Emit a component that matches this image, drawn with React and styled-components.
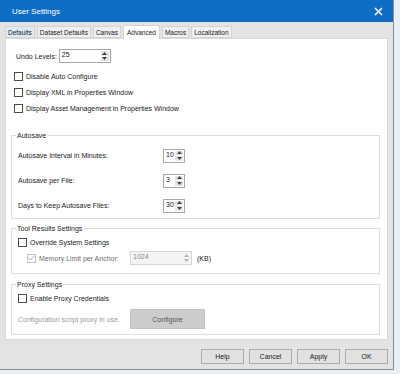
import React from 'react'
import styled, { createGlobalStyle } from 'styled-components'

const GlobalStyle = createGlobalStyle`
  html, body {
    margin: 0;
    padding: 0;
    background: #e9eef8;
  }
  body {
    font-family: "Liberation Sans", Arial, sans-serif;
    font-size: 7px;
    color: #1a1a1a;
  }
  * {
    box-sizing: border-box;
  }
`

const Window = styled.div`
  width: 394px;
  height: 370px;
  border-right: 1px solid #8f8f8f;
  border-bottom: 1px solid #8f8f8f;
  background: #e3e3e3;
  display: flex;
  flex-direction: column;
`

const TitleBar = styled.div`
  height: 22px;
  flex-shrink: 0;
  background: #0e6ec6;
  color: #fff;
  display: flex;
  align-items: center;
  justify-content: space-between;
  padding: 0 10px 0 12px;
  font-size: 8px;
`

const TabStrip = styled.div`
  display: flex;
  align-items: flex-end;
  height: 16px;
  flex-shrink: 0;
  padding: 0 0 0 5px;
  gap: 2px;
  font-size: 6.5px;
`

const Tab = styled.div`
  height: ${p => (p.$active ? '14px' : '12px')};
  padding: 0 ${p => (p.$active ? '3px' : '2px')};
  display: flex;
  align-items: center;
  background: ${p => (p.$active ? '#fff' : p.$hover ? '#dde9f5' : '#efefef')};
  border: 1px solid #d4d4d4;
  border-bottom: ${p => (p.$active ? 'none' : '1px solid #d4d4d4')};
  margin-bottom: ${p => (p.$active ? '-1px' : '0')};
  position: relative;
  z-index: ${p => (p.$active ? 1 : 0)};
`

const Panel = styled.div`
  margin: 0 5px 0 5px;
  height: 302px;
  flex-shrink: 0;
  background: #fff;
  border: 1px solid #d9d9d9;
  padding: 10px 0 0 5px;
  display: flex;
  flex-direction: column;
`

const UndoRow = styled.div`
  display: flex;
  align-items: center;
  gap: 2px;
  padding-left: 5px;
  margin-bottom: 5px;
`

const CheckRow = styled.label`
  display: flex;
  align-items: center;
  gap: 2px;
  height: 16px;
  flex-shrink: 0;
  margin-top: ${p => p.$mt || 0}px;
  padding-left: ${p => p.$indent ?? 3}px;
  color: ${p => (p.$dim ? '#6d6d6d' : '#1a1a1a')};
`

const Box = styled.span`
  width: 9px;
  height: 9px;
  border: 1px solid ${p => (p.$disabled ? '#c4c4c4' : '#4a4a4a')};
  background: #fff;
  display: inline-flex;
  align-items: center;
  justify-content: center;
  margin-right: 1px;
`

const Group = styled.fieldset`
  margin: ${p => p.$mt}px 7px 0 0;
  border: 1px solid #dedede;
  padding: 0 0 0 6px;
  min-width: 0;
  height: ${p => p.$h}px;
  flex-shrink: 0;
  display: flex;
  flex-direction: column;
`

const Legend = styled.legend`
  padding: 0 1px;
  margin-left: -2px;
  font-size: 7px;
  line-height: 9px;
`

const FieldRow = styled.div`
  display: flex;
  align-items: center;
  height: 25px;
  flex-shrink: 0;
  &:first-of-type {
    margin-top: 3px;
  }
`

const FieldLabel = styled.span`
  width: ${p => p.$w || 145}px;
`

const Spin = styled.div`
  width: ${p => p.$w}px;
  height: 14px;
  border: 1px solid ${p => (p.$disabled ? '#d6d6d6' : '#a8a8a8')};
  background: ${p => (p.$disabled ? '#f4f4f4' : '#fff')};
  display: flex;
  color: ${p => (p.$disabled ? '#8a8a8a' : '#1a1a1a')};
`

const SpinValue = styled.span`
  flex: 1;
  padding: 1px 0 0 2px;
`

const SpinButtons = styled.div`
  width: 8px;
  display: flex;
  flex-direction: column;
  margin: 1px 1px 1px 0;
  gap: 1px;
`

const SpinBtn = styled.div`
  flex: 1;
  background: ${p => (p.$disabled ? '#f4f4f4' : '#e6e6e6')};
  display: flex;
  align-items: center;
  justify-content: center;
`

const Unit = styled.span`
  color: #1a1a1a;
  margin-left: 3px;
`

const ProxyLine = styled.div`
  display: flex;
  align-items: center;
  margin-top: 3px;
  color: #9a9a9a;
`

const ProxyNote = styled.span`
  width: 112px;
`

const GrayButton = styled.div`
  width: 75px;
  height: 20px;
  background: #cccccc;
  border: 1px solid #c4c4c4;
  color: #555;
  display: flex;
  align-items: center;
  justify-content: center;
`

const Footer = styled.div`
  flex: 1;
  display: flex;
  justify-content: flex-end;
  align-items: flex-start;
  padding: 9px 5px 0 0;
  gap: 5px;
`

const Button = styled.div`
  width: 43px;
  height: 15px;
  background: #e1e1e1;
  border: 1px solid #adadad;
  display: flex;
  align-items: center;
  justify-content: center;
  color: #1a1a1a;
`

function Arrow({ up, disabled }) {
  return (
    <svg width="5" height="3" viewBox="0 0 5 3">
      <path d={up ? 'M0 3 L2.5 0 L5 3 Z' : 'M0 0 L2.5 3 L5 0 Z'} fill={disabled ? '#b5b5b5' : '#404040'} />
    </svg>
  )
}

function Spinner({ value, width, disabled }) {
  return (
    <Spin $w={width} $disabled={disabled}>
      <SpinValue>{value}</SpinValue>
      <SpinButtons>
        <SpinBtn $disabled={disabled}><Arrow up disabled={disabled} /></SpinBtn>
        <SpinBtn $disabled={disabled}><Arrow disabled={disabled} /></SpinBtn>
      </SpinButtons>
    </Spin>
  )
}

function Tick() {
  return (
    <svg width="7" height="6" viewBox="0 0 7 6">
      <path d="M0.5 3 L2.7 5 L6.5 0.8" stroke="#a8a8a8" strokeWidth="1" fill="none" />
    </svg>
  )
}

function Check({ children, indent, mt }) {
  return (
    <CheckRow $indent={indent} $mt={mt}>
      <Box />
      {children}
    </CheckRow>
  )
}

const tabs = ['Defaults', 'Dataset Defaults', 'Canvas', 'Advanced', 'Macros', 'Localization']

export default function App() {
  return (
    <>
      <GlobalStyle />
      <Window>
        <TitleBar>
          <span>User Settings</span>
          <svg width="9" height="9" viewBox="0 0 9 9">
            <path d="M1 1 L8 8 M8 1 L1 8" stroke="#fff" strokeWidth="1.6" />
          </svg>
        </TitleBar>
        <TabStrip>
          {tabs.map(t => (
            <Tab key={t} $active={t === 'Advanced'} $hover={t === 'Defaults'}>{t}</Tab>
          ))}
        </TabStrip>
        <Panel>
          <UndoRow>
            <span>Undo Levels:</span>
            <Spinner value="25" width={52} />
          </UndoRow>
          <Check>Disable Auto Configure</Check>
          <Check>Display XML in Properties Window</Check>
          <Check>Display Asset Management in Properties Window</Check>

          <Group $h={88} $mt={15}>
            <Legend>Autosave</Legend>
            <FieldRow>
              <FieldLabel>Autosave Interval in Minutes:</FieldLabel>
              <Spinner value="10" width={22} />
            </FieldRow>
            <FieldRow>
              <FieldLabel>Autosave per File:</FieldLabel>
              <Spinner value="3" width={22} />
            </FieldRow>
            <FieldRow>
              <FieldLabel>Days to Keep Autosave Files:</FieldLabel>
              <Spinner value="30" width={22} />
            </FieldRow>
          </Group>

          <Group $h={50} $mt={5}>
            <Legend>Tool Results Settings</Legend>
            <Check indent={0} mt={1}>Override System Settings</Check>
            <CheckRow $indent={9} $dim>
              <Box $disabled><Tick /></Box>
              <FieldLabel $w={89}>Memory Limit per Anchor:</FieldLabel>
              <Spinner value="1024" width={62} disabled />
              <Unit>(KB)</Unit>
            </CheckRow>
          </Group>

          <Group $h={55} $mt={6}>
            <Legend>Proxy Settings</Legend>
            <Check indent={0} mt={1}>Enable Proxy Credentials</Check>
            <ProxyLine>
              <ProxyNote>Configuration script proxy in use.</ProxyNote>
              <GrayButton>Configure</GrayButton>
            </ProxyLine>
          </Group>
        </Panel>
        <Footer>
          <Button>Help</Button>
          <Button>Cancel</Button>
          <Button>Apply</Button>
          <Button>OK</Button>
        </Footer>
      </Window>
    </>
  )
}
